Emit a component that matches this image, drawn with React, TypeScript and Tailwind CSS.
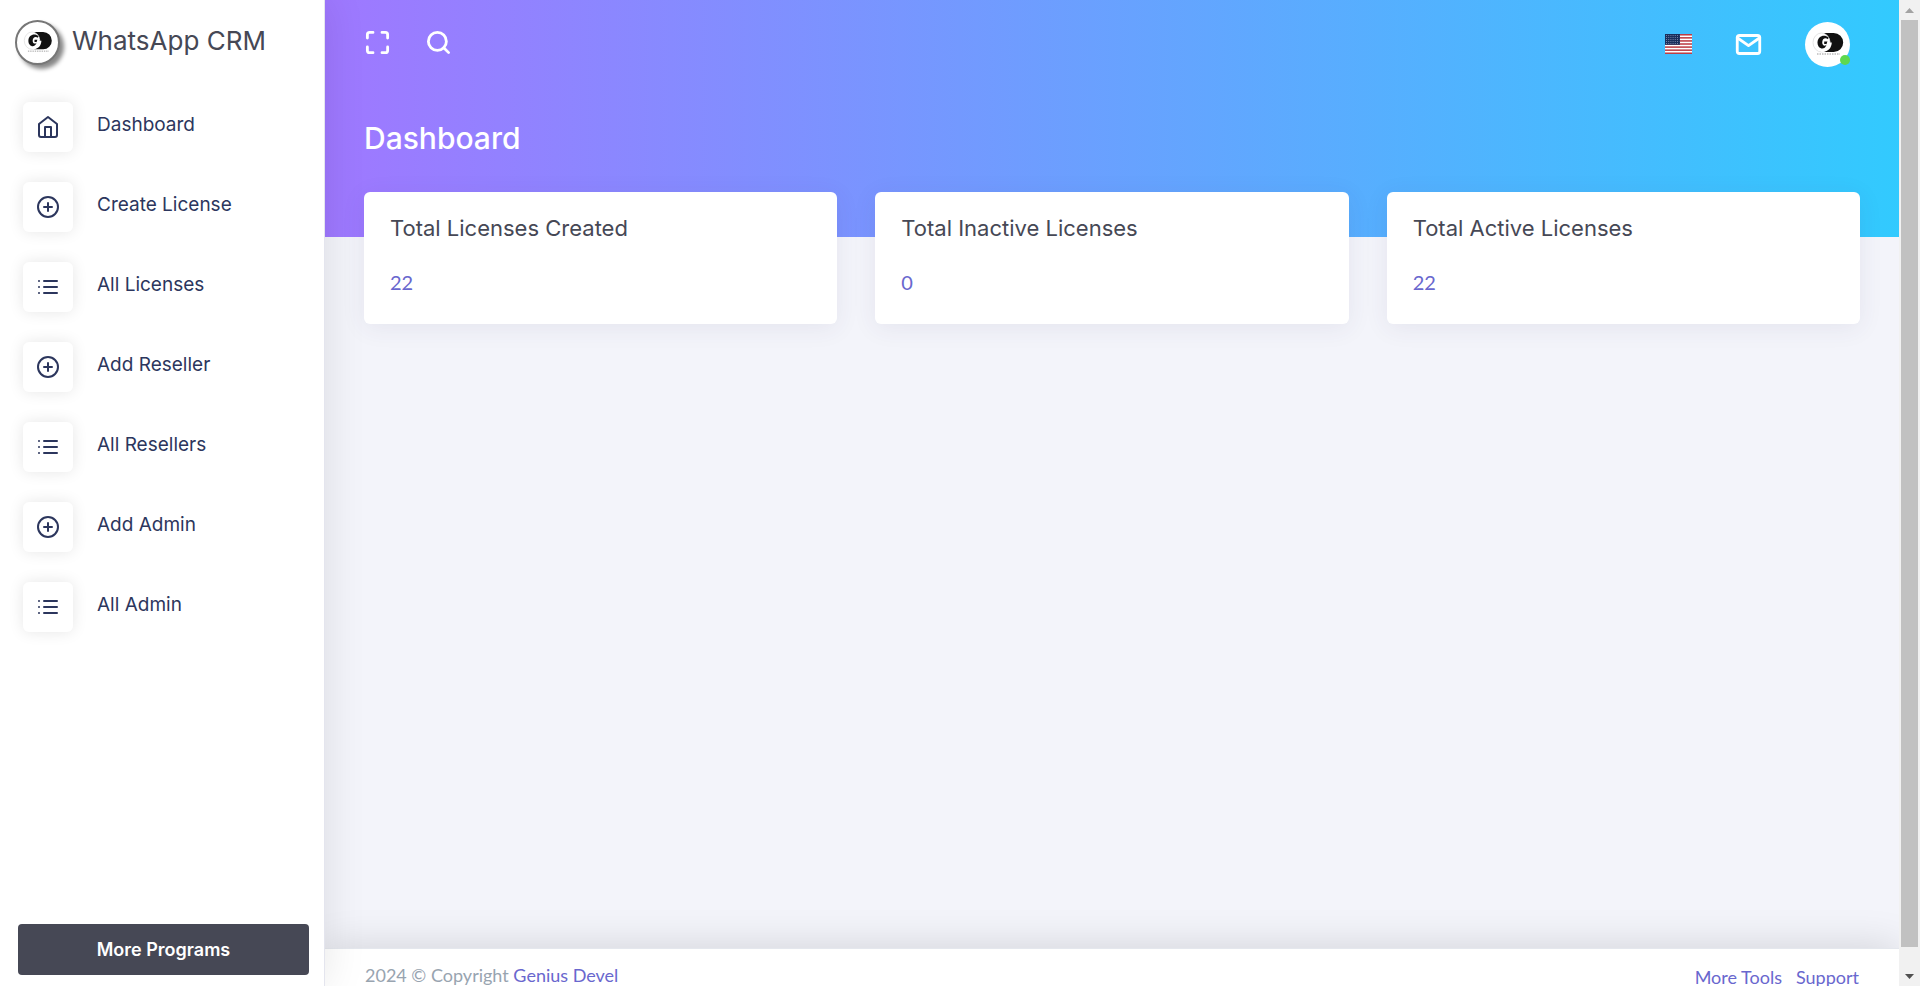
// App.tsx

import { ComponentType } from 'react';
import { FiHome, FiList, FiMail, FiMaximize, FiPlusCircle, FiSearch } from 'react-icons/fi';

interface NavItem {
  label: string;
  icon: ComponentType<{ className?: string }>;
}

const navItems: NavItem[] = [
  { label: 'Dashboard', icon: FiHome },
  { label: 'Create License', icon: FiPlusCircle },
  { label: 'All Licenses', icon: FiList },
  { label: 'Add Reseller', icon: FiPlusCircle },
  { label: 'All Resellers', icon: FiList },
  { label: 'Add Admin', icon: FiPlusCircle },
  { label: 'All Admin', icon: FiList }
];

const stats = [
  { title: 'Total Licenses Created', value: 22 },
  { title: 'Total Inactive Licenses', value: 0 },
  { title: 'Total Active Licenses', value: 22 }
];

function BrandMark({ className }: { className?: string }) {
  return (
    <svg viewBox="0 0 45 45" className={className} aria-hidden="true">
      <path d="M19 11h9.700a9.500 9.500 0 0 1 0 19H19z" fill="#111" />
      <ellipse cx="16.500" cy="20.500" rx="8.500" ry="9.500" fill="#fff" stroke="#ddd" strokeWidth="0.8" />
      <path d="M16 29.500c6 1 10.500-2.500 10.800-9H20v3z" fill="#fff" />
      <path d="M23.500 15.500c-4-3.800-11-1.500-11 5s6.500 7.800 8.500 3.500" fill="#111" />
      <path d="M23 17.200c-2.800-2-5.800-.4-5.800 3.300 0 3.400 3.300 4.300 5 1.500h-3v-2.500h6.300" fill="#fff" />
      <path d="M12 32h23" stroke="#999" strokeDasharray="1.500 1" />
    </svg>
  );
}

function FlagIcon() {
  return (
    <svg viewBox="0 0 27 20" className="h-5 w-[27px]" aria-hidden="true">
      <rect width="27" height="20" fill="#fff" />
      {[0, 1, 2, 3, 4, 5, 6].map((i) => (
        <rect key={i} y={i * 3.08} width="27" height="1.54" fill="#bd3d44" />
      ))}
      <rect width="15" height="10.8" fill="#192f5d" />
      {[1.5, 3.5, 5.5, 7.5, 9.5].map((y) => (
        <path key={y} d={`M1 ${y}h13.500`} stroke="#8b95b5" strokeWidth="0.8" strokeDasharray="1 1.200" />
      ))}
    </svg>
  );
}

function Sidebar() {
  return (
    <aside className="relative z-10 flex w-[325px] shrink-0 flex-col border-r border-[#e4e5ee] bg-white shadow-[0_0_40px_rgba(0,0,0,0.1)]">
      <a href="#" className="flex items-center gap-3 px-[15px] pt-5 text-[#464855]">
        <span className="h-[45px] w-[45px] rounded-full border-2 border-[#777] bg-white shadow-[4px_4px_4px_#888]">
          <BrandMark className="h-full w-full" />
        </span>
        <span className="pb-1 text-[26px] leading-10">WhatsApp CRM</span>
      </a>

      <nav className="mt-[37px] flex flex-col gap-[30px] px-[23px]">
        {navItems.map((item) => (
          <a key={item.label} href="#" className="flex items-center gap-6 text-[#2c365d]">
            <span className="flex h-[50px] w-[50px] items-center justify-center rounded-md bg-white shadow-[0_0_15px_rgba(0,0,0,0.1)]">
              <item.icon className="h-6 w-6" />
            </span>
            <span className="pb-1 text-[19px] leading-6">{item.label}</span>
          </a>
        ))}
      </nav>

      <button type="button" className="mx-[18px] mr-[15px] mt-auto mb-[11px] h-[51px] rounded bg-[#464855] text-[18px] font-semibold text-white">
        More Programs
      </button>
    </aside>
  );
}

function TopBar() {
  return (
    <header className="h-[237px] bg-[linear-gradient(to_right,#9f78ff,#32cafe)] pr-[49px] pl-[39px]">
      <div className="flex h-[88px] items-center justify-between text-white">
        <div className="flex items-center gap-[34px] pb-1">
          <button type="button" aria-label="Full screen">
            <FiMaximize className="h-[27px] w-[27px] stroke-[2.5]" />
          </button>
          <button type="button" aria-label="Search">
            <FiSearch className="h-[27px] w-[27px] stroke-[2.5]" />
          </button>
        </div>
        <div className="flex items-center gap-[43px]">
          <button type="button" aria-label="Language">
            <FlagIcon />
          </button>
          <button type="button" aria-label="Messages">
            <FiMail className="h-[27px] w-[27px] stroke-[2.5]" />
          </button>
          <button type="button" aria-label="Account" className="relative h-[45px] w-[45px] rounded-full bg-white">
            <BrandMark className="h-full w-full" />
            <span className="absolute right-0 bottom-0.5 h-2.5 w-2.5 rounded-full bg-[#5ed84f]" />
          </button>
        </div>
      </div>
      <h1 className="mt-[30px] text-[30px] leading-10 font-medium text-white">Dashboard</h1>
    </header>
  );
}

function Footer() {
  return (
    <footer className="flex h-[38px] shrink-0 items-start justify-between overflow-hidden border-t border-[#e4e7ed] bg-white px-10 font-[Lato,sans-serif] text-[18px] leading-6 text-[#98a4b0] shadow-[0_0_40px_rgba(0,0,0,0.15)]">
      <p className="pt-3.5">
        2024 © Copyright <a href="#" className="text-[#6967ce]">Genius Devel</a>
      </p>
      <div className="flex gap-3.5 pt-4 text-[#6967ce]">
        <a href="#">More Tools</a>
        <a href="#">Support</a>
      </div>
    </footer>
  );
}

function ScrollTrack() {
  return (
    <div className="flex w-[21px] shrink-0 flex-col items-center bg-[#f1f1f1]" aria-hidden="true">
      <svg viewBox="0 0 21 20" className="h-5 w-[21px]">
        <path d="M6 13l4.500-5 4.500 5z" fill="#a3a3a3" />
      </svg>
      <div className="w-[17px] flex-1 bg-[#c1c1c1]" />
      <svg viewBox="0 0 21 39" className="h-[39px] w-[21px]">
        <path d="M6 27l4.500 5 4.500-5z" fill="#505050" />
      </svg>
    </div>
  );
}

export default function App() {
  return (
    <div className="flex h-screen overflow-hidden bg-[#f3f4fa] font-[Inter,sans-serif]">
      <Sidebar />
      <div className="flex min-w-0 flex-1 flex-col">
        <TopBar />
        <main className="-mt-[45px] grid flex-1 grid-cols-3 content-start gap-[38px] px-[39px]">
          {stats.map((stat) => (
            <section key={stat.title} className="h-[132px] rounded-md bg-white px-[26px] pt-6 shadow-[0_4px_25px_rgba(62,57,107,0.08)]">
              <h2 className="text-[22px] leading-6 text-[#464855]">{stat.title}</h2>
              <p className="mt-[30px] font-[Lato,sans-serif] text-[20px] leading-6 text-[#6967ce]">{stat.value}</p>
            </section>
          ))}
        </main>
        <Footer />
      </div>
      <ScrollTrack />
    </div>
  );
}
